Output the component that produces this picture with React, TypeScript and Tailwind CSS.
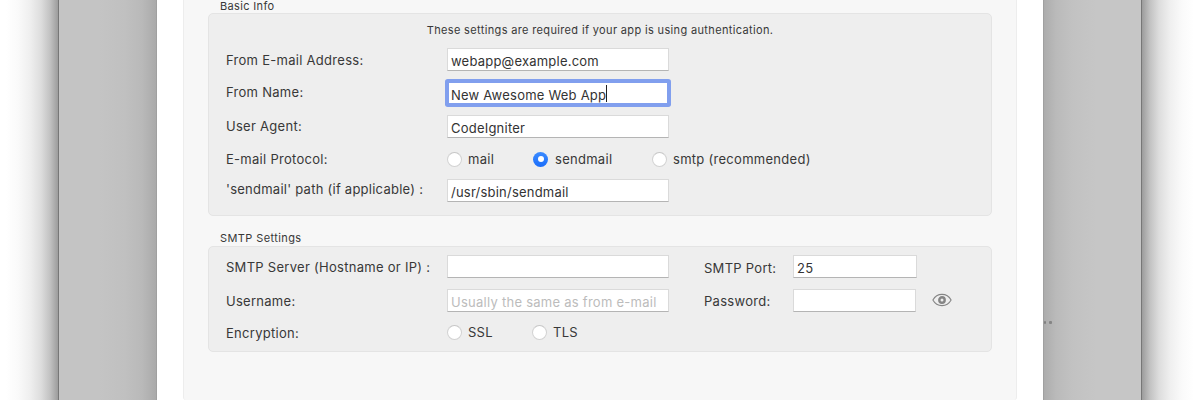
import type { ReactNode } from 'react';

const fieldBase =
  'block bg-white px-[3px] pt-[2px] leading-[21px] text-[13px] tracking-[0.22px] text-[#333333] whitespace-nowrap';
const fieldIdle = 'h-[23px] border border-[#dadada] border-b-[#b4b4b4]';
const fieldFocused = 'h-[24px] border-2 border-[#819fee] ring-2 ring-[#819fee] rounded-[1px] pl-[2px] pt-0';

function Field({ children, focused, className = 'w-[222px]' }: { children?: ReactNode; focused?: boolean; className?: string }) {
  return <div className={`${fieldBase} ${focused ? fieldFocused : fieldIdle} ${className}`}>{children}</div>;
}

function Row({ label, labelClass, className, children }: { label: string; labelClass: string; className: string; children: ReactNode }) {
  return (
    <div className={`flex items-start ${className}`}>
      <div className={`w-[221px] shrink-0 whitespace-nowrap leading-4 ${labelClass}`}>{label}</div>
      {children}
    </div>
  );
}

function Radio({ label, checked, className }: { label: string; checked?: boolean; className: string }) {
  return (
    <div className={`flex shrink-0 items-center leading-4 ${className}`}>
      {checked ? (
        <span className="mr-[7px] flex size-[15px] items-center justify-center rounded-full bg-linear-to-b from-[#3b8bff] to-[#1a6dfa]">
          <span className="size-[6px] rounded-full bg-white" />
        </span>
      ) : (
        <span className="mr-[6px] size-[15px] rounded-full border border-[#d2d2d2] border-t-[#c6c6c6] bg-white" />
      )}
      <span className="whitespace-nowrap">{label}</span>
    </div>
  );
}

function EyeIcon() {
  return (
    <svg className="mt-[4px] ml-[16px] h-[14px] w-[20px] shrink-0" viewBox="0 0 20 14" fill="none" stroke="#858585">
      <path d="M0.9 7C3 3.2 6.2 1.4 10 1.4S17 3.2 19.1 7C17 10.8 13.8 12.6 10 12.6S3 10.8 0.9 7Z" strokeWidth="1.1" />
      <circle cx="10" cy="7" r="2.7" strokeWidth="2.4" />
    </svg>
  );
}

export default function App() {
  return (
    <div className="flex h-[400px] w-[1200px] overflow-hidden bg-white font-['Inter','Liberation_Sans',sans-serif] text-[13px] tracking-[0.28px] text-[#383838]">
      <div className="w-[58px] shrink-0 bg-[linear-gradient(to_right,#ffffff_6px,#fafafa_18px,#efefef_30px,#dddddd_41px,#c2c2c2_50px,#9c9c9c_58px)]" />
      <div className="w-[99px] shrink-0 border-r border-l border-r-[#a0a0a0] border-l-[#777777] bg-[linear-gradient(to_right,#c4c4c4_40px,#c0c0c0_66px,#b9b9b9_83px,#aaaaaa_97px)]" />

      <div className="w-[886px] shrink-0 px-[26px]">
        <div className="h-[400px] rounded-b-[3px] border-x border-[#ededed] bg-[#f7f7f7] px-[24px]">
          <div className="h-[13px] pl-[12px] text-[11px] leading-[12px] tracking-[0.34px]">Basic Info</div>
          <section className="h-[203px] rounded-[5px] border border-[#e4e4e4] bg-[#eeeeee] pl-[17px]">
            <div className="h-[34px] pt-[8px] pr-[17px] text-center text-[11px] leading-4 tracking-[0.35px]">
              These settings are required if your app is using authentication.
            </div>
            <Row label="From E-mail Address:" labelClass="pt-[4px]" className="h-[33px]">
              <Field>webapp@example.com</Field>
            </Row>
            <Row label="From Name:" labelClass="pt-[3px]" className="h-[34px]">
              <Field focused>
                <span className="inline-block h-[17px] border-r border-[#222222] leading-[20px]">New Awesome Web App</span>
              </Field>
            </Row>
            <Row label="User Agent:" labelClass="pt-[3px]" className="h-[34px]">
              <Field>CodeIgniter</Field>
            </Row>
            <Row label="E-mail Protocol:" labelClass="pt-[2px]" className="h-[30px]">
              <Radio label="mail" className="w-[86px] pt-[2px]" />
              <Radio label="sendmail" checked className="w-[119px] pt-[2px]" />
              <Radio label="smtp (recommended)" className="pt-[2px]" />
            </Row>
            <Row label="'sendmail' path (if applicable) :" labelClass="pt-[2px] tracking-[0.25px]" className="h-[36px]">
              <Field>/usr/sbin/sendmail</Field>
            </Row>
          </section>

          <div className="h-[30px] pt-[16px] pl-[12px] text-[11px] leading-[13px] tracking-[0.4px]">SMTP Settings</div>
          <section className="h-[106px] rounded-[5px] border border-[#e4e4e4] bg-[#eeeeee] pt-[8px] pl-[17px]">
            <Row label="SMTP Server (Hostname or IP) :" labelClass="pt-[4px]" className="h-[34px]">
              <Field className="w-[222px] shrink-0" />
              <div className="w-[124px] shrink-0 pt-[5px] pl-[35px] leading-4 whitespace-nowrap">SMTP Port:</div>
              <Field className="w-[124px] shrink-0">25</Field>
            </Row>
            <Row label="Username:" labelClass="pt-[4px]" className="h-[34px]">
              <Field className="w-[222px] shrink-0">
                <span className="tracking-[0.26px] text-[#bcbcbc]">Usually the same as from e-mail</span>
              </Field>
              <div className="w-[124px] shrink-0 pt-[4px] pl-[35px] leading-4 whitespace-nowrap">Password:</div>
              <Field className="w-[123px] shrink-0" />
              <EyeIcon />
            </Row>
            <Row label="Encryption:" labelClass="pt-[2px]" className="h-[28px]">
              <Radio label="SSL" className="w-[85px] pt-[1px]" />
              <Radio label="TLS" className="pt-[1px]" />
            </Row>
          </section>
        </div>
      </div>

      <div className="w-[99px] shrink-0 overflow-hidden border-r border-l border-r-[#777777] border-l-[#a0a0a0] bg-[linear-gradient(to_left,#c6c6c6_45px,#c2c2c2_68px,#bababa_85px,#acacac_97px)]">
        <div className="mt-[321px] flex gap-[3px]">
          <span className="h-[3px] w-[2px] rounded-[1px] bg-[#808080]" />
          <span className="size-[3px] rounded-[1px] bg-[#858585]" />
        </div>
      </div>
      <div className="w-[58px] shrink-0 bg-[linear-gradient(to_left,#ffffff_6px,#fafafa_18px,#efefef_30px,#dddddd_41px,#c2c2c2_50px,#9c9c9c_58px)]" />
    </div>
  );
}
